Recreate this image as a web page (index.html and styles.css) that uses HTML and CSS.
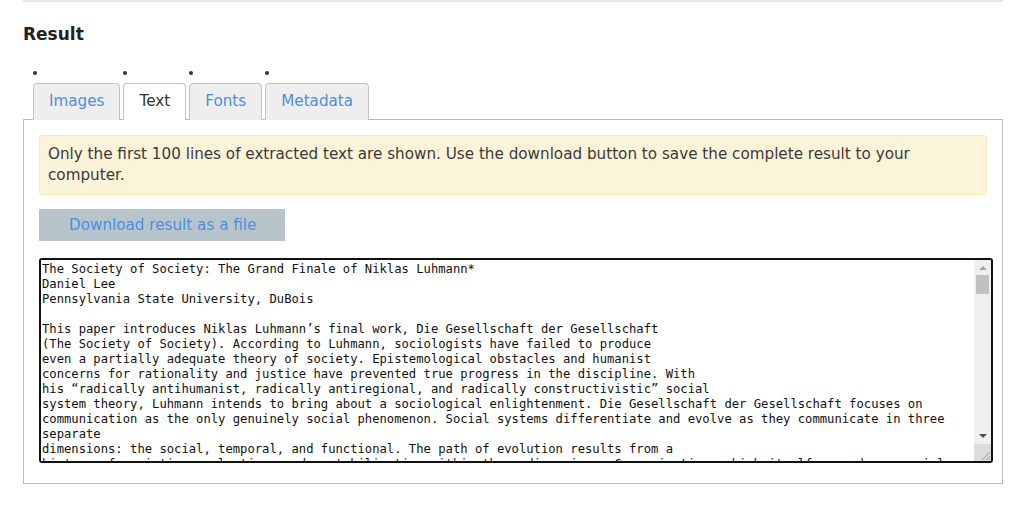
FILE: index.html
```html
<!DOCTYPE html>
<html lang="en">
<head>
    <meta charset="UTF-8">
    <meta name="viewport" content="width=device-width, initial-scale=1.0">
    <title>Result</title>
    <link rel="stylesheet" href="styles.css">
</head>
<body>
    <div class="page">
        <hr class="top-rule">
        <h2>Result</h2>

        <!-- Pestañas -->
        <ul class="tabs">
            <li><a href="#">Images</a></li>
            <li class="active"><a href="#">Text</a></li>
            <li><a href="#">Fonts</a></li>
            <li><a href="#">Metadata</a></li>
        </ul>

        <div class="panel">
            <div class="alert">Only the first 100 lines of extracted text are shown. Use the download button to save the complete result to your computer.</div>

            <button type="button" class="download">Download result as a file</button>

            <!-- Caja de texto con barra de desplazamiento -->
            <div class="output-box">
                <textarea class="output" readonly>The Society of Society: The Grand Finale of Niklas Luhmann*
Daniel Lee
Pennsylvania State University, DuBois

This paper introduces Niklas Luhmann’s final work, Die Gesellschaft der Gesellschaft
(The Society of Society). According to Luhmann, sociologists have failed to produce
even a partially adequate theory of society. Epistemological obstacles and humanist
concerns for rationality and justice have prevented true progress in the discipline. With
his “radically antihumanist, radically antiregional, and radically constructivistic” social
system theory, Luhmann intends to bring about a sociological enlightenment. Die Gesellschaft der Gesellschaft focuses on
communication as the only genuinely social phenomenon. Social systems differentiate and evolve as they communicate in three separate
dimensions: the social, temporal, and functional. The path of evolution results from a
history of variation, selection, and restabilization within these dimensions. Communication, which itself reproduces social
systems, is made possible by the media of communication.
</textarea>
                <div class="scrollbar">
                    <span class="arrow">
                        <svg width="8" height="5" viewBox="0 0 8 5"><path d="M0 5L4 1L8 5z" fill="#a3a3a3"/></svg>
                    </span>
                    <span class="thumb"></span>
                    <span class="track"></span>
                    <span class="arrow">
                        <svg width="8" height="5" viewBox="0 0 8 5"><path d="M0 0L8 0L4 4z" fill="#505050"/></svg>
                    </span>
                    <span class="corner">
                        <svg width="12" height="12" viewBox="0 0 12 12"><path d="M11 3L3 11M11 7L7 11M11 10L10 11" stroke="#9a9a9a" stroke-width="1"/></svg>
                    </span>
                </div>
            </div>
        </div>
    </div>
</body>
</html>
```

FILE: styles.css
```css
/* Estilos generales */
body {
    margin: 0;
    padding: 0;
    font-family: "DejaVu Sans", sans-serif;
    color: #333;
    background: #fff;
}

.page {
    width: 980px;
    padding: 0 0 0 23px;
}

.top-rule {
    margin: 0;
    border: none;
    border-top: 2px solid #e6e6e6;
}

h2 {
    margin: 20px 0 0;
    font-size: 17px;
    line-height: 24px;
    color: #222;
}

/* Pestañas */
.tabs {
    display: flex;
    gap: 3px;
    margin: 20px 0 0 10px;
    padding: 0;
    list-style: disc inside;
    font-size: 14px;
    line-height: 12px;
}

.tabs li {
    display: list-item;
    margin-bottom: -1px;
}

.tabs a {
    display: block;
    margin-top: 5px;
    padding: 8px 15px 9px;
    line-height: 19px;
    font-size: 15.2px;
    color: #4a90e2;
    text-decoration: none;
    background: #eee;
    border: 1px solid #c4c4c4;
    border-bottom: none;
    border-radius: 4px 4px 0 0;
}

.tabs .active a {
    position: relative;
    background: #fff;
    color: #333;
}

/* Panel */
.panel {
    border: 1px solid #bbb;
    padding: 15px 15px 20px;
}

.alert {
    padding: 8px;
    font-size: 15.2px;
    line-height: 21px;
    color: #3a3a3a;
    background: #fcf4d9;
    border: 1px solid #fbe8b0;
    border-radius: 3px;
}

.download {
    display: block;
    margin-top: 14px;
    width: 246px;
    height: 32px;
    padding: 0 0 0 30px;
    text-align: left;
    font-family: "DejaVu Sans", sans-serif;
    font-size: 15.2px;
    color: #4a90e2;
    background: #b8c4cc;
    border: none;
    cursor: pointer;
}

/* Caja de texto */
.output-box {
    display: flex;
    margin-top: 17px;
    width: calc(100% + 6px);
    height: 205px;
    box-sizing: border-box;
    border: 2px solid #111;
    border-radius: 3px;
    overflow: hidden;
}

.output {
    flex: 1;
    margin: 0;
    padding: 2px 1px 0;
    font-family: "DejaVu Sans Mono", monospace;
    font-size: 12.2px;
    line-height: 15px;
    color: #111;
    border: none;
    outline: none;
    white-space: pre-wrap;
    overflow: hidden;
    resize: none;
}

.scrollbar {
    display: flex;
    flex-direction: column;
    width: 17px;
    background: #f0f0f0;
}

.scrollbar .arrow {
    display: flex;
    align-items: center;
    justify-content: center;
    height: 15px;
}

.scrollbar .thumb {
    height: 19px;
    margin: 0 2px;
    background: #c1c1c1;
}

.scrollbar .track {
    flex: 1;
}

.scrollbar .corner {
    display: flex;
    align-items: flex-end;
    justify-content: flex-end;
    height: 17px;
    background: #dcdcdc;
}
```
